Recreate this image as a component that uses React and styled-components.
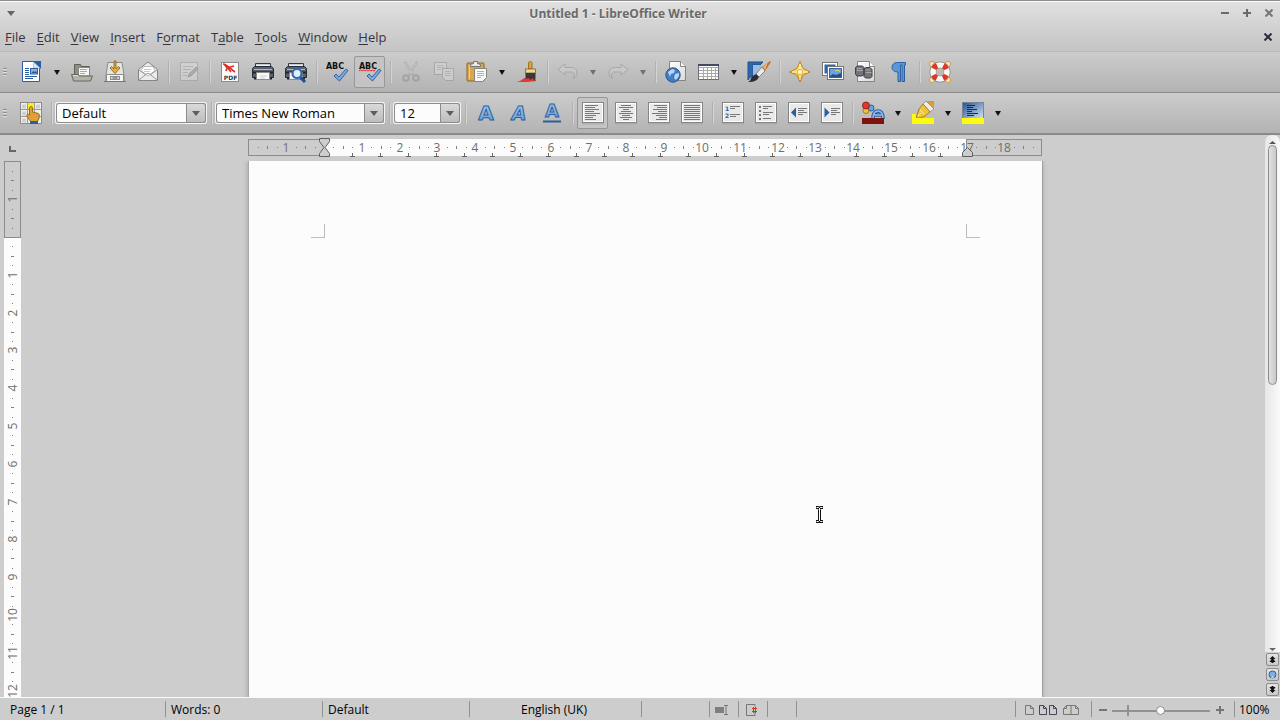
import React, { useEffect, useState } from 'react'
import styled, { createGlobalStyle, css } from 'styled-components'

const theme = {
  font: '"Open Sans", "Noto Sans", sans-serif',
  base: '#cdcdcd',
  line: '#8c8c8c',
  paper: '#fcfcfc',
  text: '#35353d',
  black: '#101018',
  blue: '#2f65a8',
}

const CM = 37.8

const GlobalStyle = createGlobalStyle`
  * {
    box-sizing: border-box;
  }

  body {
    margin: 0;
    font-family: ${theme.font};
    font-size: 12px;
    color: ${theme.black};
    background: ${theme.base};
    overflow: hidden;
  }

  button, select, input {
    font: inherit;
    color: inherit;
    margin: 0;
  }

  svg {
    display: block;
    flex: none;
  }
`

const Window = styled.div`
  display: flex;
  flex-direction: column;
  height: 100vh;
`

const Header = styled.header`
  flex: none;
  border-top: 1px solid #8f8f8f;
  box-shadow: inset 0 1px #fafafa;
  background: linear-gradient(#e1e1e1, #c4c4c4);
`

const TitleBar = styled.div`
  display: flex;
  align-items: center;
  height: 24px;
`

const Title = styled.h1`
  flex: 1;
  margin: 0;
  padding-top: 1px;
  font-size: 12px;
  font-weight: 700;
  line-height: 24px;
  text-align: center;
  color: #696969;
  text-shadow: 0 1px #f0f0f0;
`

const FlatButton = styled.button`
  display: flex;
  align-items: center;
  justify-content: center;
  width: 22px;
  height: 22px;
  padding: 0;
  border: 0;
  background: none;
`

const MenuBar = styled.nav`
  display: flex;
  align-items: center;
  height: 26px;
  padding: 0 1px 2px 5px;
  color: ${theme.text};
`

const MenuLinks = styled.div`
  display: flex;
  flex: 1;
  gap: 11px;
`

const MenuLink = styled.a`
  font-size: 13px;
  line-height: 24px;
  color: inherit;
  text-decoration: none;
`

const Mnemonic = styled.span`
  text-decoration: underline;
  text-underline-offset: 2px;
`

const ToolBar = styled.div`
  display: flex;
  align-items: center;
  flex: none;
  height: 42px;
  border-top: ${p => (p.$last ? '0' : '1px solid #bababa')};
  border-bottom: ${p => (p.$last ? '2px' : '1px')} solid #8a8a8a;
  background: linear-gradient(#cccccc, #b3b3b3);
`

const Grip = styled.span`
  width: 4px;
  height: 9px;
  margin: 0 ${p => p.$gap || 8}px 0 3px;
  background: repeating-linear-gradient(#8f8f8f 0 1px, #dddddd 1px 2px, transparent 2px 3px);
`

const ToolButton = styled.button`
  display: flex;
  align-items: center;
  justify-content: center;
  flex: none;
  width: 31px;
  height: 32px;
  margin: 0 1px;
  padding: 0;
  border: 1px solid transparent;
  border-radius: 2px;
  background: none;

  ${p => p.$active && css`
    border-color: #979797;
    background: #c4c4c4;
  `}

  &:disabled {
    opacity: 0.5;
  }
`

const DropButton = styled.button`
  display: flex;
  align-items: center;
  justify-content: center;
  flex: none;
  width: 17px;
  height: 32px;
  padding: 0;
  border: 0;
  background: none;

  &:disabled {
    opacity: 0.45;
  }
`

const Divider = styled.span`
  flex: none;
  width: 2px;
  height: 22px;
  margin: 0 2px 0 4px;
  border-left: 1px solid #b0b0b0;
  border-right: 1px solid #d4d4d4;
`

const Combo = styled.label`
  position: relative;
  flex: none;
  width: ${p => p.$width}px;
  height: 22px;
  border: 1px solid #f4f4f4;
  border-radius: 2px;
`

const ComboSelect = styled.select`
  appearance: none;
  display: block;
  width: 100%;
  height: 20px;
  padding: 0 20px 0 5px;
  border: 1px solid ${theme.line};
  border-radius: 3px;
  background: ${theme.paper};
  font-size: 13px;
  line-height: 18px;
  color: #000;
`

const ComboArrow = styled.span`
  position: absolute;
  top: 0;
  right: 0;
  display: flex;
  align-items: center;
  justify-content: center;
  width: 20px;
  height: 20px;
  border: 1px solid ${theme.line};
  border-radius: 0 3px 3px 0;
  background: linear-gradient(#dadada, #bdbdbd);
  pointer-events: none;
`

const Workspace = styled.main`
  display: grid;
  grid-template-columns: 25px minmax(0, 1fr) 15px;
  grid-template-rows: 26px minmax(0, 1fr);
  flex: 1;
  min-height: 0;
  overflow: hidden;
  background: ${theme.base};
`

const TabCorner = styled.div`
  padding: 11px 0 0 9px;
`

const HorizontalStrip = styled.div`
  display: flex;
  justify-content: center;
  align-items: center;
  padding-bottom: 1px;
`

const VerticalStrip = styled.div`
  padding-left: 4px;
  overflow: hidden;
`

const Canvas = styled.div`
  display: flex;
  justify-content: center;
  overflow: hidden;
`

const Page = styled.article`
  position: relative;
  display: flex;
  justify-content: space-between;
  flex: none;
  width: 794px;
  height: 1123px;
  padding: 63px 62px 0;
  border-left: 1px solid #a8a8a8;
  background: ${theme.paper};
  box-shadow: 1px 0 #a0a0a0, 0 0 5px #9c9c9c;
`

const MarginCorner = styled.span`
  width: 14px;
  height: 14px;
  border-bottom: 1px solid #bcbcbc;
  border-left: ${p => (p.$side === 'right' ? '1px solid #bcbcbc' : '0')};
  border-right: ${p => (p.$side === 'left' ? '1px solid #bcbcbc' : '0')};
`

const Caret = styled.span`
  position: absolute;
  left: 566px;
  top: 345px;
`

const ScrollColumn = styled.div`
  grid-column: 3;
  grid-row: 1 / 3;
  display: flex;
  flex-direction: column;
  align-items: center;
`

const ScrollTrack = styled.div`
  display: flex;
  flex-direction: column;
  align-items: center;
  flex: 1;
  width: 100%;
  padding: 6px 0 1px;
  border-radius: 7px 7px 0 0;
  background: linear-gradient(90deg, #e6e6e6, #fafafa);
`

const ScrollThumb = styled.div`
  width: 9px;
  height: 47%;
  margin: 1px 0 auto;
  border: 1px solid ${theme.line};
  border-radius: 5px;
  background: linear-gradient(90deg, #e2e2e2, #c8c8c8);
`

const PageButton = styled.button`
  display: flex;
  align-items: center;
  justify-content: center;
  width: 13px;
  height: 13px;
  margin: 1px 0;
  padding: 0;
  border: 1px solid ${theme.line};
  border-radius: 2px;
  background: linear-gradient(#e4e4e4, #c9c9c9);
`

const StatusBar = styled.footer`
  display: flex;
  align-items: center;
  flex: none;
  height: 23px;
  border-top: 1px solid #fafafa;
  background: ${theme.base};
`

const StatusCell = styled.div`
  display: flex;
  align-items: center;
  flex: ${p => (p.$width ? 'none' : '1')};
  width: ${p => (p.$width ? p.$width + 'px' : 'auto')};
  height: 16px;
  padding-top: 2px;
  padding-left: ${p => p.$pad || 5}px;
  border-right: ${p => (p.$open ? '0' : '1px solid #919191')};
  font-size: 12px;
  line-height: 16px;
  white-space: nowrap;
  color: #000;
`

const ViewButton = styled(FlatButton)`
  width: auto;
  height: 16px;
  margin-right: 5px;
`

const ZoomButton = styled(FlatButton)`
  width: 11px;
  height: 16px;
`

const ZoomSlider = styled.input`
  appearance: none;
  width: 98px;
  height: 15px;
  margin: 0 4px;
  background:
    linear-gradient(#929292, #929292) 15px 2px / 2px 11px no-repeat,
    linear-gradient(#929292, #929292) 0 7px / 100% 2px no-repeat;

  &::-webkit-slider-thumb {
    appearance: none;
    width: 9px;
    height: 9px;
    border: 1px solid ${theme.line};
    border-radius: 50%;
    background: #fff;
  }
`

const Defs = styled.svg`
  position: absolute;
`

const Gradients = () => (
  <Defs width="0" height="0" aria-hidden="true">
    <defs>
      <linearGradient id="blue" x2="0" y2="1">
        <stop offset="0" stopColor="#a8cdf0" />
        <stop offset="1" stopColor="#5c9ad6" />
      </linearGradient>
      <linearGradient id="paper" x2="1" y2="1">
        <stop offset="0" stopColor="#ffffff" />
        <stop offset="1" stopColor="#d9d9d6" />
      </linearGradient>
      <linearGradient id="gold" x2="0" y2="1">
        <stop offset="0" stopColor="#fff3a0" />
        <stop offset="1" stopColor="#eda91c" />
      </linearGradient>
      <linearGradient id="deep" x2="1" y2="1">
        <stop offset="0" stopColor="#1f5296" />
        <stop offset="1" stopColor="#dbe9f6" />
      </linearGradient>
    </defs>
  </Defs>
)

const Icon = ({ children, size = 24 }) => (
  <svg width={size} height={size} viewBox="0 0 24 24" fill="none" aria-hidden="true">
    {children}
  </svg>
)

const DownArrow = ({ color = theme.black, width = 6 }) => (
  <svg width={width} height="5" viewBox="0 0 6 4" preserveAspectRatio="none" aria-hidden="true">
    <path d="M0 0h6L3 4z" fill={color} />
  </svg>
)

const SheetFrame = ({ children }) => (
  <Icon>
    <rect x="1" y="22" width="22" height="1.5" fill="#a0a0a0" opacity="0.5" />
    <rect x="1.5" y="1.5" width="21" height="20" fill="#e9e9e7" stroke="#858585" />
    <rect x="2.5" y="2.5" width="19" height="18" stroke="#fff" />
    {children}
  </Icon>
)

const Lines = ({ rows, color = '#777' }) => (
  <path
    d={rows.map(([x, y, w]) => `M${x} ${y + 0.5}h${w}`).join('')}
    stroke={color}
    strokeWidth="1"
  />
)

const NewIcon = () => (
  <Icon>
    <path d="M2.5 1.5h11l6 6v14h-17z" fill="#fff" stroke="#2a5ea5" />
    <path d="M13 1h8v8z" fill="#2a5ea5" />
    <path d="M13.5 2v6H20z" fill="#dfe9f4" stroke="#86a9cf" strokeWidth="0.6" />
    <path d="M5 8.5h4M5 10.5h4M5 12.5h4M5 14.5h4M5 16.5h12M5 18.5h8" stroke="#2a5ea5" />
    <rect x="10.5" y="8.5" width="7" height="5.5" fill="#8ab4dc" stroke="#2a5ea5" />
    <path d="M11.5 13l2-2 1.5 1 1-1 1 2z" fill="#2a5a75" />
  </Icon>
)

const OpenIcon = () => (
  <Icon>
    <path d="M4.500 17V4.500h6l1 2h8V17z" fill="#8f8f86" stroke="#5f5f58" />
    <path d="M8.500 7.500h11V16h-11z" fill="#f6f6f4" stroke="#888" />
    <path d="M10 9.500h7M10 11.500h7M10 13.500h5" stroke="#aaa" />
    <path d="M1.500 14.500h7l1 1.500h13l-2 5h-17z" fill="#b3b3a8" stroke="#66665f" />
    <path d="M3 15.500h5" stroke="#dcdcd4" />
  </Icon>
)

const SaveIcon = () => (
  <Icon>
    <path d="M5 2.500h14l2 12v7H3v-7z" fill="#e4e4e2" stroke="#8b8b88" />
    <path d="M3.500 14.500h17v7h-17z" fill="#f6f6f4" stroke="#8b8b88" />
    <path d="M1 21.500h22" stroke="#777" />
    <rect x="7.500" y="16.500" width="9" height="3" fill="#ddd" stroke="#8b8b88" />
    <path d="M9.500 18h5" stroke="#555" />
    <path d="M11 1h2v8l2.500-2.500 1.500 1.500-5 5.500L7 8l1.500-1.500L11 9z" fill="#e8b040" stroke="#8d6518" strokeWidth="0.9" />
  </Icon>
)

const MailIcon = () => (
  <Icon>
    <path d="M2.500 9.500L12 2l9.500 7.500V20.500h-19z" fill="#ececea" stroke="#858583" />
    <path d="M5 10.500l3-4h9l2 4-7 5.500z" fill="#fff" stroke="#aaa" strokeWidth="0.800" />
    <path d="M3 20l8-6.500h2l8 6.500M3 10l7 5M21 10l-7 5" stroke="#9b9b99" />
    <path d="M8 9.500h7M8 11.500h6" stroke="#bbb" strokeWidth="0.800" />
  </Icon>
)

const EditIcon = () => (
  <Icon>
    <rect x="3.500" y="2.500" width="17" height="18" fill="#dcdcdc" stroke="#999" />
    <path d="M6 6.500h10M6 9.500h8M6 12.500h5M6 15.500h4" stroke="#a5a5a5" />
    <path d="M11 17l1-3 7-7 2 2-7 7z" fill="#999" stroke="#757575" strokeWidth="0.800" />
  </Icon>
)

const PixelText = styled.text`
  font-family: "DejaVu Sans", sans-serif;
  font-size: ${p => p.$size || 8}px;
  font-weight: 700;
`

const PdfIcon = () => (
  <Icon>
    <rect x="3.500" y="2.500" width="17" height="19" fill="#fbfbfb" stroke="#8b8b88" />
    <path d="M5 4c4 0 6 4 12 8M8 11c0-3 3-4 8-5M6 4l4 5M10 8l3 4" stroke="#e02b20" strokeWidth="1.600" />
    <PixelText x="12.500" y="20" $size={6} textAnchor="middle" fill="#333a4c">PDF</PixelText>
  </Icon>
)

const PrinterBody = () => (
  <>
    <path d="M4.500 8V3.500h15V8" fill="#c9ccd3" stroke="#333946" />
    <path d="M5 5.500h14" stroke="#f0f0f0" />
    <path d="M1.500 8.500l2-2h17l2 2v9h-21z" fill="#59606e" stroke="#252b38" />
    <path d="M3 9.500h18" stroke="#b4bac4" />
    <path d="M2 12.500h20M3 18.500h18" stroke="#20242e" strokeWidth="2" />
    <path d="M5.500 12.500h13v7h-13z" fill="#f8f8f8" stroke="#8b8b88" />
  </>
)

const PrintIcon = () => (
  <Icon>
    <PrinterBody />
    <path d="M9 16h7M9 18h5" stroke="#d0d0d0" />
  </Icon>
)

const PreviewIcon = () => (
  <Icon>
    <PrinterBody />
    <path d="M16 17l5 5" stroke="#1f4f90" strokeWidth="3" />
    <circle cx="13" cy="13.500" r="4.500" fill="#e6eff8" stroke="#2f6cb3" strokeWidth="2.200" />
  </Icon>
)

const SpellIcon = ({ wavy }) => (
  <Icon>
    <PixelText x="10" y="9" $size={8} textAnchor="middle" fill="#101010">ABC</PixelText>
    {wavy && <path d="M1 11l1.500-1 1.500 1 1.500-1 1.500 1 1.500-1 1.500 1 1.500-1 1.500 1 1.500-1 1.500 1 1.500-1" stroke="#e02b20" />}
    <path d="M9 16l2-2 3 3 7-8 2 1.500-8.500 10.500z" fill="#79abdf" stroke="#2a5a96" strokeWidth="0.900" />
  </Icon>
)

const CutIcon = () => (
  <Icon>
    <path d="M6 2l8 13M18 2l-8 13" stroke="#8c8c8c" strokeWidth="2.200" />
    <path d="M6.500 3l7 11M17.500 3l-7 11" stroke="#d5d5d5" />
    <circle cx="7" cy="18" r="2.800" stroke="#8c8c8c" strokeWidth="2" />
    <circle cx="17" cy="18" r="2.800" stroke="#8c8c8c" strokeWidth="2" />
  </Icon>
)

const CopyIcon = () => (
  <Icon>
    <rect x="2.500" y="2.500" width="12" height="12" fill="#dadada" stroke="#909090" />
    <path d="M5 5.500h7M5 7.500h7M5 9.500h4" stroke="#aaa" />
    <path d="M10.500 8.500h11v12h-8l-3-3z" fill="#dadada" stroke="#909090" />
    <path d="M13 11.500h6M13 13.500h6M13 15.500h6" stroke="#aaa" />
  </Icon>
)

const PasteIcon = () => (
  <Icon>
    <rect x="2" y="3" width="17" height="18" rx="1" fill="#d8a64e" stroke="#8e6421" />
    <path d="M4.500 5v14" stroke="#efcf8f" />
    <path d="M5.500 6.500V4.500l3-1V1.500h4v2l3 1v2z" fill="#e8e8e6" stroke="#77776f" />
    <path d="M9.500 8.500h12v9l-4 4h-8z" fill="#f8f8f8" stroke="#85857f" />
    <path d="M12 11.500h7M12 13.500h7M12 15.500h7M12 17.500h4" stroke="#b0b0ac" />
  </Icon>
)

const BrushIcon = () => (
  <Icon>
    <path d="M1 22c4 0 6-3 9-4h10l1 3c-3 1-14 1-20 1z" fill="#e23b2e" />
    <path d="M13.500 9V3c0-2 3.500-2 3.500 0v6z" fill="#e2a030" stroke="#8d6518" strokeWidth="0.800" />
    <rect x="10.500" y="9" width="10" height="4" fill="#f2d793" stroke="#7d6330" strokeWidth="0.800" />
    <path d="M10.500 13h10v5l-1 3-2-3-2 2-2-2-3 1z" fill="#38383c" />
  </Icon>
)

const UndoIcon = ({ flip }) => (
  <Icon>
    <path
      transform={flip ? 'matrix(-1 0 0 1 24 0)' : undefined}
      d="M2 9.500L9 4v3.500h6c4 0 6 2.500 6 5.500s-1.500 4.500-3.500 5.500c2-3.500 1-6.500-2.500-6.500H9V15z"
      fill="#cfcfcf"
      stroke="#8f8f8f"
    />
  </Icon>
)

const LinkIcon = () => (
  <Icon>
    <path d="M5.500 1.500h11l5 5v14h-16z" fill="url(#paper)" stroke="#85857f" />
    <path d="M16.500 1.500v5h5" fill="#fff" stroke="#85857f" />
    <circle cx="9" cy="15" r="7.200" fill="#3f7cc0" stroke="#245594" />
    <path d="M4 12l4-3 3 1-1 3-3 1-1 3zM11 14l4-1v3l-3 4-2-2zM12 9l3 2" fill="#b7d7f2" />
  </Icon>
)

const TableIcon = () => (
  <Icon>
    <rect x="1.500" y="4.500" width="20" height="15" fill="#fdfdfd" stroke="#6d6f7d" />
    <path d="M1 5h21" stroke="#454a61" strokeWidth="2" />
    <path d="M2 7.500h19M2 10.500h19M2 13.500h19M2 16.500h19M6.500 7v12M10.500 7v12M14.500 7v12M18.500 7v12" stroke="#aaaaa5" />
  </Icon>
)

const DrawIcon = () => (
  <Icon>
    <path d="M1 2h15l-3 3H6v12H3l-2 3z" fill="#2e66ac" stroke="#20508f" />
    <path d="M6 5h9l-3 8-6 4z" fill="#9cbddf" />
    <path d="M23 1l-8 6 3 4 6-9z" fill="#c0702a" />
    <path d="M21 2l-5 5 2 3" fill="#efb070" />
    <path d="M15 7l3 4-6 6-3-3z" fill="#e9e9e7" stroke="#77776f" strokeWidth="0.800" />
    <path d="M9 14l3 3c-2 4-5 5-11 5 3-1 2-3 4-5 1-2 3-2 4-3z" fill="#2b2e38" />
  </Icon>
)

const NavigatorIcon = () => (
  <Icon>
    <path
      d="M12 1.500l2.500 6 1.500 1.500 6 3-6 2.500-1.500 1.500-2.500 6-2.500-6L8 14.500 1.500 12 8 9l1.500-1.500z"
      fill="url(#gold)"
      stroke="#c07f10"
      strokeLinejoin="round"
    />
    <path d="M12 4v16M4 12h16" stroke="#fff8c8" />
    <circle cx="12" cy="12" r="2.500" fill="#fffbe0" stroke="#e3b23a" />
  </Icon>
)

const GalleryIcon = () => (
  <Icon>
    <rect x="1.500" y="2.500" width="15" height="13" fill="#fff" stroke="#77776f" />
    <rect x="3.500" y="4.500" width="11" height="9" fill="#2f65a8" />
    <rect x="6.500" y="6.500" width="16" height="13" fill="#fff" stroke="#77776f" />
    <rect x="8.500" y="8.500" width="12" height="9" fill="#6fa2d8" stroke="#2f65a8" />
    <path d="M9 16l3-2 3 1 5-2v4H9z" fill="#24508a" />
    <path d="M14 11l3-1 2 2" stroke="#f1cf5a" />
  </Icon>
)

const FindIcon = () => (
  <Icon>
    <path d="M3.500 1.500h12l5 5v15h-17z" fill="url(#paper)" stroke="#85857f" />
    <path d="M15.500 1.500v5h5" fill="#fff" stroke="#85857f" />
    <path d="M1.500 7.500l2-1.500h5l1.500 1.500v7l-2 1.500h-5l-1.500-2zM10 9l2-1.500h4l2 2v7L16.500 18h-5L10 16.500z" fill="#73757a" stroke="#3e4046" />
    <path d="M3 8.500h5M3 10.500h6M11.500 10h5M11.500 12.500h6" stroke="#a6a8ad" />
  </Icon>
)

const PilcrowIcon = () => (
  <Icon>
    <path d="M18.500 2.500h-8C6.500 2.500 5 5 5 7.500S7 12 11 12v9.500h2.500V5H15v16.500h2.500V5h1z" fill="#5b97d6" stroke="#2c5f9f" />
  </Icon>
)

const HelpIcon = () => (
  <Icon>
    <path d="M4 4l16 16M20 4L4 20" stroke="#d69b3c" strokeWidth="6" strokeLinecap="round" />
    <path d="M4 4l16 16M20 4L4 20" stroke="#f6e3b8" strokeWidth="4.400" strokeLinecap="round" />
    <circle cx="12" cy="12" r="7" stroke="#85857f" strokeWidth="7" />
    <circle cx="12" cy="12" r="7" stroke="#f7f7f5" strokeWidth="5.600" />
    <circle cx="12" cy="12" r="7" stroke="#de3527" strokeWidth="5.600" strokeDasharray="4.600 6.400" strokeDashoffset="-3.200" />
    <circle cx="12" cy="12" r="3.600" fill="#bcbcbc" />
  </Icon>
)

const StylesIcon = () => (
  <Icon>
    <rect x="1.500" y="1.500" width="21" height="21" fill="#f0f0ee" stroke="#8b8b85" />
    <path d="M8.500 2v20M15.500 2v20M2 8.500h20M2 15.500h20" stroke="#9a9a94" />
    <path d="M3 3.500h4v4H3zM3 10.500h4v4H3zM3 17.500h4v4H3zM17 3.500h4v4h-4z" fill="#cfcfcc" />
    <rect x="9" y="2" width="6" height="6" fill="#fcee20" />
    <path d="M10.500 14V7c0-2 3-2 3 0v4l6 1.500c1.500 1 1 5-1 8h-7C10 18 7 15 8 13.500c1-.8 2 0 2.500.5z" fill="#dfa035" stroke="#9a6a1d" />
    <path d="M11 20h8v3h-8z" fill="#2a5ea5" />
  </Icon>
)

const LetterMark = styled.text`
  font-family: "DejaVu Sans", sans-serif;
  font-size: ${p => p.$size}px;
  font-weight: ${p => p.$weight};
  font-style: ${p => (p.$italic ? 'italic' : 'normal')};
  text-anchor: middle;
  fill: url(#blue);
  stroke: #2c5f9f;
  stroke-width: 1px;
`

const letterStyles = {
  bold: { y: 19, $size: 20, $weight: 700 },
  italic: { y: 19, $size: 19, $weight: 700, $italic: true },
  under: { y: 16, $size: 18, $weight: 700 },
}

const LetterIcon = ({ kind }) => (
  <Icon>
    <LetterMark x="12" {...letterStyles[kind]}>A</LetterMark>
    {kind === 'under' && <path d="M3 20.500h18" stroke="#2c5f9f" strokeWidth="2" />}
  </Icon>
)

const alignRows = {
  left: [[4, 4, 13], [4, 6, 10], [4, 8, 14], [4, 10, 9], [4, 12, 15], [4, 14, 11], [4, 16, 8], [4, 18, 11]],
  center: [[7, 4, 10], [5, 6, 14], [9, 8, 6], [7, 10, 10], [5, 12, 14], [8, 14, 8], [6, 16, 12], [9, 18, 6]],
  right: [[7, 4, 13], [10, 6, 10], [6, 8, 14], [11, 10, 9], [5, 12, 15], [9, 14, 11], [12, 16, 8], [9, 18, 11]],
  justify: [[4, 4, 16], [4, 6, 16], [4, 8, 16], [4, 10, 16], [4, 12, 16], [4, 14, 16], [4, 16, 16], [4, 18, 16]],
}

const AlignIcon = ({ kind }) => (
  <SheetFrame>
    <Lines rows={alignRows[kind]} />
  </SheetFrame>
)

const NumberListIcon = () => (
  <SheetFrame>
    <PixelText x="4" y="10" $size={6} fill="#2a5ea5">1</PixelText>
    <PixelText x="4" y="17" $size={6} fill="#2a5ea5">2</PixelText>
    <Lines rows={[[9, 5, 10], [9, 7, 5], [9, 13, 10], [9, 15, 6]]} />
  </SheetFrame>
)

const BulletListIcon = () => (
  <SheetFrame>
    <path d="M5 5h2v2H5zM5 9h2v2H5zM5 13h2v2H5zM5 17h2v2H5z" fill="#777" />
    <Lines rows={[[9, 5, 9], [9, 7, 5], [9, 11, 10], [9, 13, 6], [9, 17, 8]]} />
  </SheetFrame>
)

const IndentIcon = ({ more }) => (
  <SheetFrame>
    <path d={more ? 'M4.500 6.500v10l5-5z' : 'M9 6.500v10l-5-5z'} fill="#2a5ea5" />
    <Lines rows={[[11, 7, 9], [11, 9, 6], [11, 11, 9], [11, 13, 5]]} />
  </SheetFrame>
)

const FontColorIcon = () => (
  <Icon>
    <circle cx="5" cy="9.500" r="3" fill="#f2c23c" stroke="#a87615" />
    <circle cx="10" cy="7" r="3" fill="#6fa2d8" stroke="#2c5f9f" />
    <circle cx="5" cy="4.500" r="3.500" fill="#dd3a30" stroke="#962018" />
    <path d="M12 18c0-5 1-8 5-8s5 3 5 8M13 14h8" stroke="#2c5f9f" strokeWidth="3.600" />
    <path d="M12 18c0-5 1-8 5-8s5 3 5 8M13 14h8" stroke="#8fbdea" strokeWidth="1.600" />
    <rect x="1" y="17" width="22" height="6" fill="#7d1410" />
  </Icon>
)

const HighlightIcon = () => (
  <Icon>
    <path d="M14 0h9v7l-4 2z" fill="#dba03c" />
    <path d="M12 3l3-3 8 8-4 3z" fill="#ececea" stroke="#8b8b85" strokeWidth="0.800" />
    <path d="M16 0h7v5z" fill="#d99a35" />
    <path d="M8 8l4-5 7 8-5 4-5 2H5z" fill="#f0c33c" stroke="#a87615" strokeWidth="0.900" />
    <path d="M9 9l4 4M7 15l3-3" stroke="#fdf0a8" />
    <path d="M1 13h4v4H1z" fill="#fdfb10" />
    <rect x="1" y="17" width="22" height="6" fill="#fdfb10" />
  </Icon>
)

const BackColorIcon = () => (
  <Icon>
    <rect x="1.500" y="1.500" width="21" height="17" fill="url(#deep)" stroke="#7a8494" />
    <Lines rows={[[6, 4, 8], [6, 6, 6], [6, 8, 10], [6, 10, 5], [6, 12, 11], [6, 14, 7]]} color="#14305a" />
    <rect x="1" y="17" width="22" height="6" fill="#fdfb10" />
  </Icon>
)

const standardTools = [
  { label: 'New', icon: <NewIcon />, drop: true },
  { label: 'Open', icon: <OpenIcon /> },
  { label: 'Save', icon: <SaveIcon /> },
  { label: 'E-mail document', icon: <MailIcon /> },
  null,
  { label: 'Edit file', icon: <EditIcon />, disabled: true },
  null,
  { label: 'Export as PDF', icon: <PdfIcon /> },
  { label: 'Print', icon: <PrintIcon /> },
  { label: 'Print preview', icon: <PreviewIcon /> },
  null,
  { label: 'Spelling', icon: <SpellIcon /> },
  { label: 'Automatic spelling', icon: <SpellIcon wavy />, active: true },
  null,
  { label: 'Cut', icon: <CutIcon />, disabled: true },
  { label: 'Copy', icon: <CopyIcon />, disabled: true },
  { label: 'Paste', icon: <PasteIcon />, drop: true },
  { label: 'Clone formatting', icon: <BrushIcon /> },
  null,
  { label: 'Undo', icon: <UndoIcon />, drop: true, disabled: true },
  { label: 'Redo', icon: <UndoIcon flip />, drop: true, disabled: true },
  null,
  { label: 'Hyperlink', icon: <LinkIcon /> },
  { label: 'Table', icon: <TableIcon />, drop: true },
  { label: 'Draw functions', icon: <DrawIcon /> },
  null,
  { label: 'Navigator', icon: <NavigatorIcon /> },
  { label: 'Gallery', icon: <GalleryIcon /> },
  { label: 'Find and replace', icon: <FindIcon /> },
  { label: 'Nonprinting characters', icon: <PilcrowIcon /> },
  null,
  { label: 'Help', icon: <HelpIcon /> },
]

const formatTools = [
  { label: 'Bold', icon: <LetterIcon kind="bold" /> },
  { label: 'Italic', icon: <LetterIcon kind="italic" /> },
  { label: 'Underline', icon: <LetterIcon kind="under" /> },
  null,
  { label: 'Align left', icon: <AlignIcon kind="left" />, active: true },
  { label: 'Centre', icon: <AlignIcon kind="center" /> },
  { label: 'Align right', icon: <AlignIcon kind="right" /> },
  { label: 'Justify', icon: <AlignIcon kind="justify" /> },
  null,
  { label: 'Numbering', icon: <NumberListIcon /> },
  { label: 'Bullets', icon: <BulletListIcon /> },
  { label: 'Decrease indent', icon: <IndentIcon /> },
  { label: 'Increase indent', icon: <IndentIcon more /> },
  null,
  { label: 'Font colour', icon: <FontColorIcon />, drop: true },
  { label: 'Highlighting', icon: <HighlightIcon />, drop: true },
  { label: 'Background colour', icon: <BackColorIcon />, drop: true },
]

// [before, mnemonic, after]
const menus = [
  ['', 'F', 'ile'],
  ['', 'E', 'dit'],
  ['', 'V', 'iew'],
  ['', 'I', 'nsert'],
  ['F', 'o', 'rmat'],
  ['T', 'a', 'ble'],
  ['', 'T', 'ools'],
  ['', 'W', 'indow'],
  ['', 'H', 'elp'],
]

const Tools = ({ items }) =>
  items.map((item, i) =>
    item ? (
      <React.Fragment key={item.label}>
        <ToolButton
          type="button"
          aria-label={item.label}
          $active={item.active}
          disabled={item.disabled}
        >
          {item.icon}
        </ToolButton>
        {item.drop && (
          <DropButton type="button" aria-label={item.label + ' options'} disabled={item.disabled}>
            <DownArrow />
          </DropButton>
        )}
      </React.Fragment>
    ) : (
      <Divider key={i} />
    )
  )

const ComboBox = ({ label, width, value }) => (
  <Combo $width={width}>
    <ComboSelect aria-label={label} defaultValue={value}>
      <option>{value}</option>
    </ComboSelect>
    <ComboArrow>
      <DownArrow color="#5c5c66" width={8} />
    </ComboArrow>
  </Combo>
)

const RulerText = styled.text`
  font-family: ${theme.font};
  font-size: 12px;
  fill: #6f6f6a;
  text-anchor: middle;
`

// Quarter-centimetre marks on either side of zero; whole centimetres carry a number.
const marks = (from, to) => {
  const list = []
  for (let i = from; i <= to; i++) {
    if (i !== 0) list.push({ i, at: Math.round((i * CM) / 4), whole: i % 4 === 0, half: i % 2 === 0 })
  }
  return list
}

const HorizontalRuler = () => (
  <svg width="794" height="19" aria-label="Horizontal ruler">
    <rect x="0.500" y="1.500" width="793" height="16" fill={theme.base} stroke={theme.line} />
    <rect x="76" y="1" width="642" height="17" fill={theme.paper} />
    {marks(-7, 75).map(({ i, at, whole, half }) =>
      whole ? (
        <RulerText key={i} x={76 + at} y="14">{Math.abs(i / 4)}</RulerText>
      ) : (
        <rect key={i} x={76 + at} y={half ? 8 : 9} width="1" height={half ? 3 : 1} fill="#808080" />
      )
    )}
    {Array.from({ length: 22 }, (_, n) => (
      <path key={n} d={`M${102 + n * 28} 18.500h5M${104.5 + n * 28} 15v3`} stroke="#666" />
    ))}
    <path d="M718.500 1v16" stroke={theme.line} />
    <path d="M71.500 .5h10v3l-4.500 6 4.500 6v3h-10v-3l4.500-6-4.500-6z" fill={theme.base} stroke="#5f5f5f" />
    <path d="M714.500 18.500v-4l5-5 5 5v4z" fill={theme.base} stroke="#5f5f5f" />
  </svg>
)

const useWindowHeight = () => {
  const [height, setHeight] = useState(window.innerHeight)

  useEffect(() => {
    const update = () => setHeight(window.innerHeight)
    window.addEventListener('resize', update)
    return () => window.removeEventListener('resize', update)
  }, [])

  return height
}

// Only the marks that fit between the toolbars and the status bar are drawn.
const VerticalRuler = () => {
  const visible = useWindowHeight() - 260
  const last = Math.min(98, Math.floor((visible * 4) / CM))

  return (
    <svg width="17" height="1123" aria-label="Vertical ruler">
      <rect width="17" height="1123" fill={theme.paper} />
      <rect x="0.500" y="0.500" width="16" height="76" fill={theme.base} stroke={theme.line} />
      {marks(-7, last).map(({ i, at, whole, half }) =>
        whole ? (
          <RulerText key={i} transform={`translate(13 ${76 + at}) rotate(-90)`}>{Math.abs(i / 4)}</RulerText>
        ) : (
          <rect key={i} x={half ? 7 : 8} y={76 + at} width={half ? 3 : 1} height="1" fill="#808080" />
        )
      )}
    </svg>
  )
}

const App = () => {
  const [zoom, setZoom] = useState(49)

  return (
    <Window>
      <GlobalStyle />
      <Gradients />
      <Header>
        <TitleBar>
          <FlatButton type="button" aria-label="Window menu">
            <DownArrow color="#666" width={8} />
          </FlatButton>
          <Title>Untitled 1 - LibreOffice Writer</Title>
          <FlatButton type="button" aria-label="Minimise">
            <svg width="8" height="8"><path d="M0 4h8" stroke="#6b6b66" strokeWidth="2" /></svg>
          </FlatButton>
          <FlatButton type="button" aria-label="Maximise">
            <svg width="8" height="8"><path d="M0 4h8M4 0v8" stroke="#6b6b66" strokeWidth="2" /></svg>
          </FlatButton>
          <FlatButton type="button" aria-label="Close">
            <svg width="8" height="8"><path d="M.5 .5l7 7M7.500 .5l-7 7" stroke="#77776f" strokeWidth="2" /></svg>
          </FlatButton>
        </TitleBar>
        <MenuBar>
          <MenuLinks>
            {menus.map(([before, key, after]) => (
              <MenuLink key={before + key + after} href="#">
                {before}<Mnemonic>{key}</Mnemonic>{after}
              </MenuLink>
            ))}
          </MenuLinks>
          <FlatButton type="button" aria-label="Close document">
            <svg width="8" height="8"><path d="M.5 .5l7 7M7.500 .5l-7 7" stroke="#2c2c40" strokeWidth="2" /></svg>
          </FlatButton>
        </MenuBar>
      </Header>

      <ToolBar>
        <Grip />
        <Tools items={standardTools} />
      </ToolBar>
      <ToolBar $last>
        <Grip $gap={7} />
        <Tools items={[{ label: 'Styles and formatting', icon: <StylesIcon /> }, null]} />
        <ComboBox label="Paragraph style" width={152} value="Default" />
        <Divider />
        <ComboBox label="Font name" width={170} value="Times New Roman" />
        <Divider />
        <ComboBox label="Font size" width={68} value="12" />
        <Divider />
        <Tools items={formatTools} />
      </ToolBar>

      <Workspace>
        <TabCorner>
          <svg width="7" height="6"><path d="M1 0v5h6" stroke="#666" strokeWidth="2" fill="none" /></svg>
        </TabCorner>
        <HorizontalStrip>
          <HorizontalRuler />
        </HorizontalStrip>
        <ScrollColumn>
          <ScrollTrack>
            <svg width="7" height="3"><path d="M0 3h7L3.500 0z" fill="#55555e" /></svg>
            <ScrollThumb />
            <svg width="7" height="3"><path d="M0 0h7L3.500 3z" fill="#66666a" /></svg>
          </ScrollTrack>
          <PageButton type="button" aria-label="Previous page">
            <svg width="7" height="7"><path d="M3.500 0L6.500 3H4.500L6.500 6H4.500v1h-2V6h-2l2-3h-2z" fill="#111" /></svg>
          </PageButton>
          <PageButton type="button" aria-label="Navigation">
            <svg width="9" height="9">
              <circle cx="4.500" cy="4.500" r="3.500" fill="#7fb0df" stroke="#2c5f9f" />
              <path d="M3 8l1.500-2L6 8z" fill="#ddd" />
            </svg>
          </PageButton>
          <PageButton type="button" aria-label="Next page">
            <svg width="7" height="7"><path d="M3.500 7L.5 4h2L.5 1h2V0h2v1h2l-2 3h2z" fill="#111" /></svg>
          </PageButton>
        </ScrollColumn>
        <VerticalStrip>
          <VerticalRuler />
        </VerticalStrip>
        <Canvas>
          <Page>
            <MarginCorner $side="left" />
            <MarginCorner $side="right" />
            <Caret>
              <svg width="9" height="17">
                <path d="M1 1.500h2l1.500 1 1.500-1h2M4.500 2v13M1 15.500h2l1.500-1 1.500 1h2" stroke="#111" strokeWidth="3" fill="none" />
                <path d="M1.500 1.500h2l1 1 1-1h2M4.500 2v13M1.500 15.500h2l1-1 1 1h2" stroke="#fff" strokeWidth="1" fill="none" />
              </svg>
            </Caret>
          </Page>
        </Canvas>
      </Workspace>

      <StatusBar>
        <StatusCell $width={166} $pad={10}>Page 1 / 1</StatusCell>
        <StatusCell $width={157}>Words: 0</StatusCell>
        <StatusCell $width={147}>Default</StatusCell>
        <StatusCell $width={172} $pad={51}>English (UK)</StatusCell>
        <StatusCell $width={68} />
        <StatusCell $width={29}>
          <svg width="13" height="12">
            <rect y="3" width="9" height="6" fill="#7f7f7c" />
            <path d="M9 1.500h4M9 10.500h4M11 2v8" stroke="#77776f" />
          </svg>
        </StatusCell>
        <StatusCell $width={29} $pad={7}>
          <svg width="12" height="12">
            <path d="M9 2.500V.5H.5v11H9V8" stroke="#77776f" fill="none" />
            <path d="M6 4.500h5M6 7.500h5M7.500 3v6M9.500 3v6" stroke="#cc3a1a" />
          </svg>
        </StatusCell>
        <StatusCell $width={29} />
        <StatusCell />
        <StatusCell $width={76} $pad={9}>
          <ViewButton type="button" aria-label="Single page">
            <svg width="9" height="10"><path d="M.5 .5h5l3 3v6h-8zM5.500 .5v3h3" stroke="#77776f" fill="none" /></svg>
          </ViewButton>
          <ViewButton type="button" aria-label="Multiple pages">
            <svg width="19" height="10">
              <path d="M.5 .5h4l3 3v6h-7zM4.500 .5v3h3M10.500 .5h4l3 3v6h-7zM14.500 .5v3h3" stroke="#45455a" fill="none" />
            </svg>
          </ViewButton>
          <ViewButton type="button" aria-label="Book view">
            <svg width="17" height="10">
              <path d="M3.500 .5h9l3 3v6h-15v-6zM8 .5v9M3.500 .5v3h-3M12.500 .5v3h3" stroke="#77776f" fill="none" />
            </svg>
          </ViewButton>
        </StatusCell>
        <StatusCell $width={143}>
          <ZoomButton type="button" aria-label="Zoom out">
            <svg width="8" height="8"><path d="M0 4h8" stroke="#77776f" strokeWidth="2" /></svg>
          </ZoomButton>
          <ZoomSlider
            type="range"
            aria-label="Zoom"
            value={zoom}
            onChange={e => setZoom(Number(e.target.value))}
          />
          <ZoomButton type="button" aria-label="Zoom in">
            <svg width="8" height="8"><path d="M0 4h8M4 0v8" stroke="#77776f" strokeWidth="2" /></svg>
          </ZoomButton>
        </StatusCell>
        <StatusCell $width={45} $pad={4} $open>100%</StatusCell>
      </StatusBar>
    </Window>
  )
}

export default App
